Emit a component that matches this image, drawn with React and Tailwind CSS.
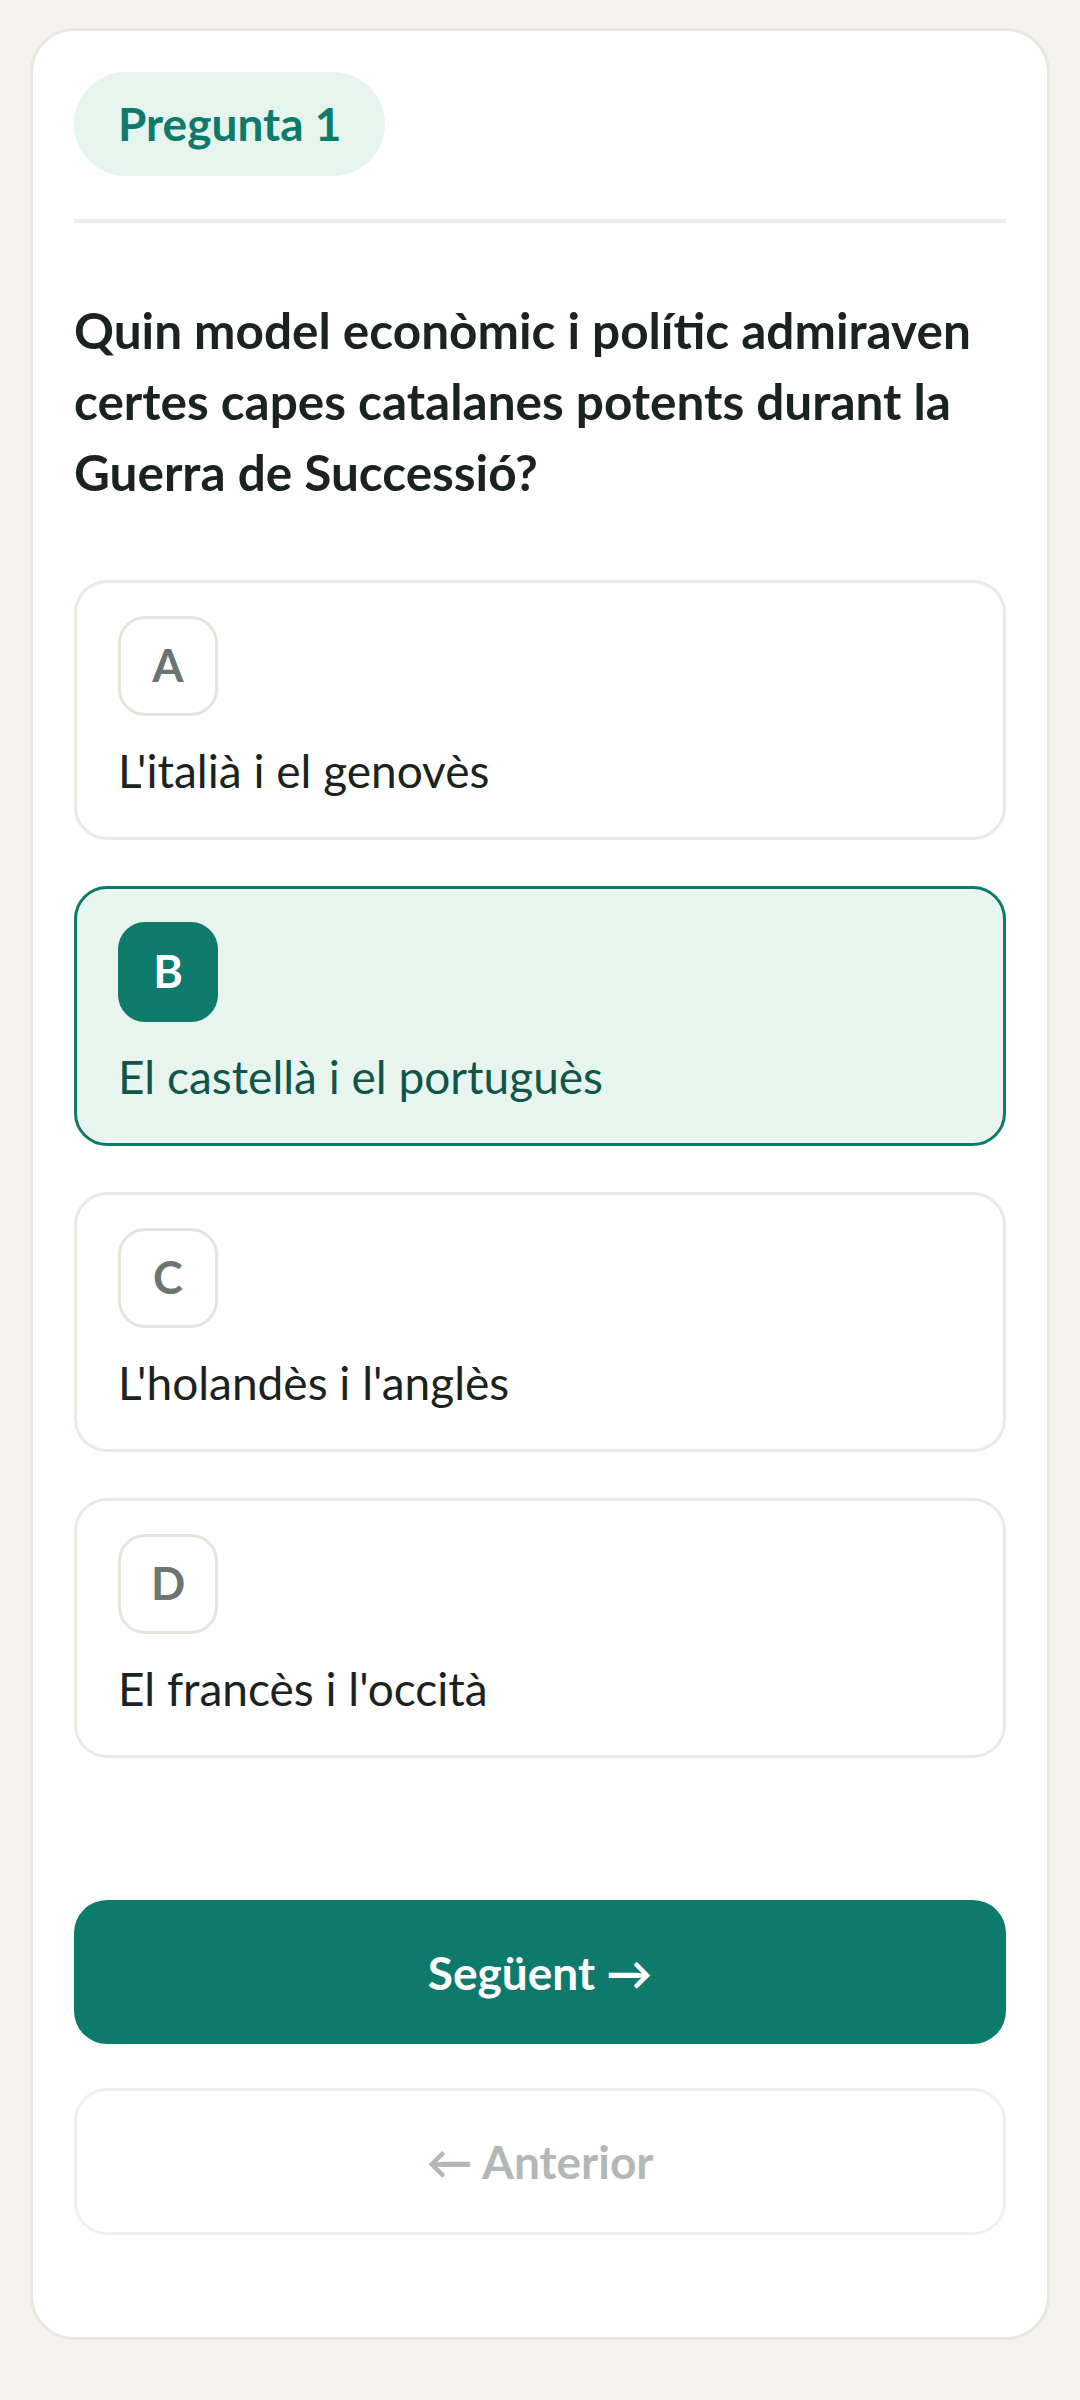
import React from 'react';

const options = [
    { key: 'A', label: "L'italià i el genovès" },
    { key: 'B', label: 'El castellà i el portuguès' },
    { key: 'C', label: "L'holandès i l'anglès" },
    { key: 'D', label: "El francès i l'occità" },
];

// Single answer option card with its letter tile
const Option = ({ letter, label, selected }) => (
    <div
        className={`rounded-[33px] border-[3px] px-[41px] py-[33px] flex flex-col gap-[22px] ${
            selected ? 'border-[#0e7a6b] bg-[#e8f5ef]' : 'border-[#ebe9e2] bg-white'
        }`}
    >
        <div
            className={`w-[100px] h-[100px] rounded-[27px] flex items-center justify-center text-[45px] font-bold ${
                selected ? 'bg-[#0e7a6b] text-white' : 'border-[3px] border-[#e6e4da] text-[#6b7570]'
            }`}
        >
            {letter}
        </div>
        <div className={`text-[46px] leading-[66px] ${selected ? 'text-[#0f5548]' : 'text-[#1b2320]'}`}>
            {label}
        </div>
    </div>
);

const App = () => {
    const selected = 'B';

    return (
        <div className="min-h-screen bg-[#f4f3ef] px-[30px] pt-[28px] pb-[64px] font-['Lato','Noto_Sans',sans-serif]">
            <div className="bg-white border-[3px] border-[#e9e7e0] rounded-[44px] px-[41px] pt-[41px] pb-[102px]">
                <div className="inline-flex items-center rounded-full bg-[#e6f4ee] px-[44px] py-[19px]">
                    <span className="text-[46px] leading-[66px] font-bold text-[#0e7a6b]">Pregunta 1</span>
                </div>

                <div className="h-[4px] bg-[#ebedec] mt-[43px]" />

                <h2 className="mt-[72px] text-[49.5px] leading-[71px] font-bold text-[#1b2320]">
                    Quin model econòmic i polític admiraven certes capes catalanes potents durant la Guerra de Successió?
                </h2>

                <div className="mt-[72px] flex flex-col gap-[46px]">
                    {options.map((o) => (
                        <Option key={o.key} letter={o.key} label={o.label} selected={o.key === selected} />
                    ))}
                </div>

                <button className="mt-[142px] w-full h-[144px] rounded-[33px] bg-[#0e7a6b] text-white text-[46px] font-bold flex items-center justify-center">
                    Següent →
                </button>

                <button className="mt-[44px] w-full h-[147px] rounded-[33px] border-[3px] border-[#f0f0ee] bg-white text-[#b4b8b5] text-[46px] font-bold flex items-center justify-center">
                    ← Anterior
                </button>
            </div>
        </div>
    );
};

export default App;
